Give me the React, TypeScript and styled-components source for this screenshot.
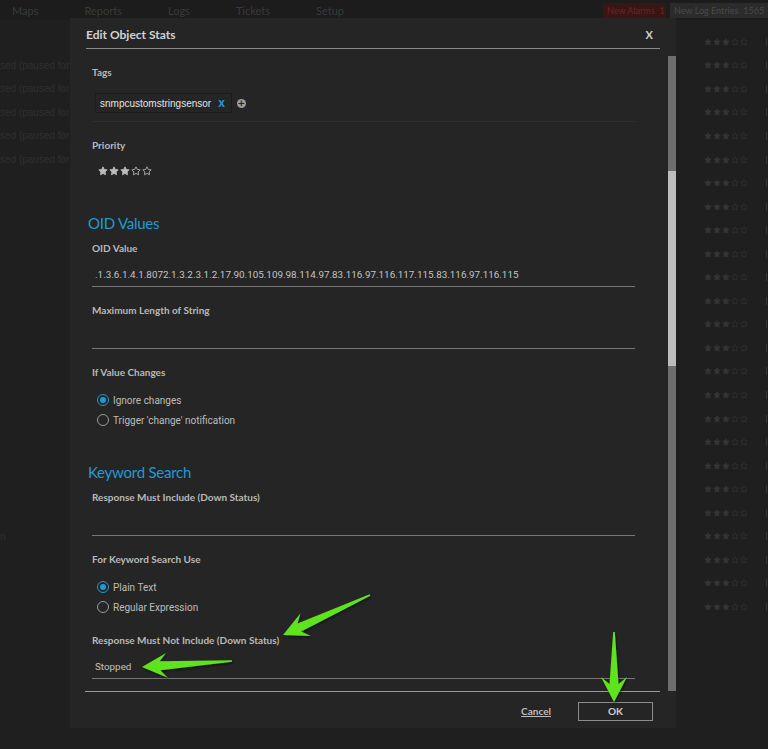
import styled, { createGlobalStyle } from 'styled-components';

const GlobalStyle = createGlobalStyle`
  html, body {
    margin: 0;
    padding: 0;
    background: #1f1f1f;
  }
  * {
    box-sizing: border-box;
  }
`;

const COLORS = {
  BG: '#1f1f1f',
  MODAL: '#252525',
  LABEL: '#b9b9b9',
  TEXT: '#bdbdbd',
  BLUE: '#1e9ad6',
  LINE: '#777777',
  DIM: '#353535',
  GREEN: '#5fe31a',
};

const StyledPage = styled.div`
  position: relative;
  width: 768px;
  height: 749px;
  overflow: hidden;
  background: ${COLORS.BG};
  font-family: Lato, 'Open Sans', sans-serif;
`;

const NavBar = styled.div`
  display: flex;
  align-items: center;
  gap: 46px;
  height: 20px;
  padding-left: 12px;
  background: #1c1c1c;
`;

const NavItem = styled.span`
  font-size: 11px;
  color: #3a3a3a;
`;

const NavBadges = styled.div`
  display: flex;
  gap: 4px;
  margin-left: auto;
  flex-shrink: 0;
`;

const Badge = styled.span<{ $tone: 'red' | 'gray'; $w: number }>`
  display: flex;
  align-items: center;
  gap: 5px;
  width: ${({ $w }) => $w}px;
  height: 15px;
  padding-left: 4px;
  font-size: 9px;
  white-space: nowrap;
  background: ${({ $tone }) => ($tone === 'red' ? '#3a1515' : '#2b2b2b')};
  color: ${({ $tone }) => ($tone === 'red' ? '#6b2424' : '#4a4a4a')};
`;

const BgTable = styled.div`
  display: flex;
  flex-direction: column;
  padding-top: 10px;
`;

const BgRow = styled.div`
  display: grid;
  grid-template-columns: 70px 1fr 62px 2px;
  align-items: center;
  height: 23.55px;
`;

const BgText = styled.span`
  font-family: 'Liberation Sans', Arial, sans-serif;
  font-size: 10px;
  color: #2f2f2f;
  white-space: nowrap;
`;

const BgMark = styled.span`
  width: 1px;
  height: 8px;
  background: #333;
`;

const StarRow = styled.div<{ $size: number; $pad?: number }>`
  display: flex;
  align-items: center;
  gap: 1px;
  padding-left: ${({ $pad }) => $pad ?? 0}px;
  svg {
    width: ${({ $size }) => $size}px;
    height: ${({ $size }) => $size}px;
  }
`;

const Modal = styled.div`
  position: absolute;
  left: 70px;
  top: 18px;
  width: 606px;
  height: 710px;
  display: flex;
  flex-direction: column;
  background: ${COLORS.MODAL};
`;

const ModalHeader = styled.div`
  display: flex;
  align-items: center;
  justify-content: space-between;
  height: 31px;
  margin: 0 16px;
  padding-top: 3px;
  padding-right: 7px;
  border-bottom: 1px solid #8a8a8a;

  .modal__title {
    font-size: 12px;
    font-weight: 700;
    color: #d2d2d2;
  }
  .modal__close {
    font-size: 11px;
    font-weight: 700;
    color: #cfcfcf;
  }
`;

const ModalBody = styled.div`
  flex: 1;
  display: flex;
  min-height: 0;
`;

const Content = styled.div`
  flex: 1;
  padding: 16px 33px 0 22px;
  overflow: hidden;
`;

const ScrollTrack = styled.div`
  width: 8px;
  margin-top: 7px;
  background: #6e6e6e;
`;

const ScrollThumb = styled.div`
  height: 195px;
  margin-top: 115px;
  background: #bdbdbd;
`;

const Field = styled.div`
  margin-top: 16px;
  &:first-child {
    margin-top: 0;
  }
`;

const SectionTitle = styled.h2`
  margin: 32px 0 0 -4px;
  font-size: 15px;
  font-weight: 400;
  letter-spacing: -0.25px;
  line-height: 20px;
  color: ${COLORS.BLUE};

  & + ${Field} {
    margin-top: 8px;
  }
`;

const Label = styled.div`
  font-size: 10px;
  font-weight: 700;
  line-height: 14px;
  color: ${COLORS.LABEL};
`;

const TagBox = styled.div`
  display: flex;
  align-items: flex-start;
  gap: 5px;
  height: 36px;
  margin-top: 7px;
  padding: 7px 0 0 3px;
  border-bottom: 1px solid #2f2f2f;
`;

const TagChip = styled.span`
  display: flex;
  align-items: center;
  gap: 7px;
  height: 20px;
  padding: 0 6px 0 4px;
  border: 1px solid #1b1b1b;
  font-family: 'Liberation Sans', Arial, sans-serif;
  font-size: 10px;
  color: #e4e4e4;

  .tag__remove {
    font-weight: 700;
    font-size: 12px;
    color: ${COLORS.BLUE};
  }
`;

const AddTag = styled.span`
  display: flex;
  align-items: center;
  justify-content: center;
  width: 9px;
  height: 9px;
  margin-top: 6px;
  border-radius: 50%;
  background: #9b9b9b;
  color: #252525;
  font-family: 'DejaVu Sans', sans-serif;
  font-size: 9px;
  font-weight: 700;
  line-height: 9px;
`;

const Stars = styled(StarRow)`
  height: 20px;
  margin-top: 9px;
`;

const Input = styled.div`
  display: flex;
  align-items: flex-end;
  height: 31px;
  margin-top: 1px;
  padding: 0 3px 4px;
  border-bottom: 1px solid ${COLORS.LINE};
  font-family: Roboto, 'Liberation Sans', sans-serif;
  font-size: 9.85px;
  line-height: 14px;
  color: #c4c4c4;
  white-space: nowrap;
`;

const RadioGroup = styled.div`
  display: flex;
  flex-direction: column;
  margin-top: 11px;
`;

const RadioRow = styled.label`
  display: flex;
  align-items: center;
  gap: 4px;
  height: 20px;
  padding-left: 5px;
  font-family: Roboto, 'Liberation Sans', sans-serif;
  font-size: 10px;
  color: ${COLORS.TEXT};
`;

const RadioCircle = styled.span<{ $checked?: boolean }>`
  display: flex;
  align-items: center;
  justify-content: center;
  width: 12px;
  height: 12px;
  border-radius: 50%;
  border: 1.5px solid ${({ $checked }) => ($checked ? COLORS.BLUE : '#9a9a9a')};

  &::after {
    content: '';
    width: 6px;
    height: 6px;
    border-radius: 50%;
    background: ${({ $checked }) => ($checked ? COLORS.BLUE : 'transparent')};
  }
`;

const ModalFooter = styled.div`
  display: flex;
  align-items: center;
  justify-content: flex-end;
  gap: 27px;
  height: 37px;
  margin: 0 16px 0 15px;
  padding: 2px 7px 0 0;
  border-top: 1px solid #9a9a9a;
`;

const LinkButton = styled.button`
  padding: 0;
  border: none;
  background: none;
  font-family: inherit;
  font-size: 10px;
  font-weight: 700;
  color: #bcbcbc;
  text-decoration: underline;
`;

const OutlineButton = styled.button`
  width: 75px;
  height: 19px;
  padding: 0;
  border: 1px solid #8c8c8c;
  background: none;
  font-family: inherit;
  font-size: 10px;
  font-weight: 700;
  color: #cfcfcf;
`;

const Annotations = styled.svg`
  position: absolute;
  inset: 0;
  pointer-events: none;
`;

const STAR_PATH =
  'M12 2l3.09 6.26L22 9.27l-5 4.87 1.18 6.88L12 17.77l-6.18 3.25L7 14.14 2 9.27l6.91-1.01L12 2z';

function Star({ filled, color }: { filled: boolean; color: string }) {
  return (
    <svg viewBox='0 0 24 24'>
      <path
        d={STAR_PATH}
        fill={filled ? color : 'none'}
        stroke={color}
        strokeWidth={2}
        strokeLinejoin='round'
      />
    </svg>
  );
}

function Rating({ value, color }: { value: number; color: string }) {
  return (
    <>
      {[0, 1, 2, 3, 4].map((i) => (
        <Star key={i} filled={i < value} color={color} />
      ))}
    </>
  );
}

// tapered "swoosh" arrow from tail to tip
const arrowPoints = (x1: number, y1: number, x2: number, y2: number, head = 25, half = 12.5, neck = 4.5) => {
  const len = Math.hypot(x2 - x1, y2 - y1);
  const ux = (x2 - x1) / len;
  const uy = (y2 - y1) / len;
  const nx = -uy;
  const ny = ux;
  const p = (d: number, w: number) => [x2 - ux * d + nx * w, y2 - uy * d + ny * w];
  return [p(len, 0.8), p(head * 0.72, neck), p(head, half), [x2, y2], p(head, -half), p(head * 0.72, -neck), p(len, -0.8)]
    .map(([a, b]) => `${a.toFixed(1)},${b.toFixed(1)}`)
    .join(' ');
};

const NAV = ['Maps', 'Reports', 'Logs', 'Tickets', 'Setup'];
const BG_LEFT: Record<number, string> = {
  1: 'sed (paused for',
  2: 'sed (paused for',
  3: 'sed (paused for',
  4: 'sed (paused for',
  5: 'sed (paused for',
  21: 'n',
};
const OID =
  '.1.3.6.1.4.1.8072.1.3.2.3.1.2.17.90.105.109.98.114.97.83.116.97.116.117.115.83.116.97.116.115';

function App() {
  return (
    <StyledPage>
      <GlobalStyle />
      <NavBar>
        {NAV.map((item) => (
          <NavItem key={item}>{item}</NavItem>
        ))}
        <NavBadges>
          <Badge $tone='red' $w={63}>
            New Alarms <span>1</span>
          </Badge>
          <Badge $tone='gray' $w={98}>
            New Log Entries <span>1565</span>
          </Badge>
        </NavBadges>
      </NavBar>

      <BgTable>
        {Array.from({ length: 25 }, (_, i) => (
          <BgRow key={i}>
            <BgText>{BG_LEFT[i] ?? ''}</BgText>
            <span />
            <StarRow $size={8}>
              <Rating value={3} color={COLORS.DIM} />
            </StarRow>
            <BgMark />
          </BgRow>
        ))}
      </BgTable>

      <Modal>
        <ModalHeader>
          <span className='modal__title'>Edit Object Stats</span>
          <span className='modal__close'>X</span>
        </ModalHeader>
        <ModalBody>
          <Content>
            <Field>
              <Label>Tags</Label>
              <TagBox>
                <TagChip>
                  snmpcustomstringsensor
                  <span className='tag__remove'>x</span>
                </TagChip>
                <AddTag>+</AddTag>
              </TagBox>
            </Field>
            <Field>
              <Label>Priority</Label>
              <Stars $size={10} $pad={6}>
                <Rating value={3} color='#bcbcbc' />
              </Stars>
            </Field>

            <SectionTitle>OID Values</SectionTitle>
            <Field>
              <Label>OID Value</Label>
              <Input>{OID}</Input>
            </Field>
            <Field>
              <Label>Maximum Length of String</Label>
              <Input />
            </Field>
            <Field>
              <Label>If Value Changes</Label>
              <RadioGroup>
                <RadioRow>
                  <RadioCircle $checked />
                  Ignore changes
                </RadioRow>
                <RadioRow>
                  <RadioCircle />
                  Trigger 'change' notification
                </RadioRow>
              </RadioGroup>
            </Field>

            <SectionTitle>Keyword Search</SectionTitle>
            <Field>
              <Label>Response Must Include (Down Status)</Label>
              <Input />
            </Field>
            <Field>
              <Label>For Keyword Search Use</Label>
              <RadioGroup>
                <RadioRow>
                  <RadioCircle $checked />
                  Plain Text
                </RadioRow>
                <RadioRow>
                  <RadioCircle />
                  Regular Expression
                </RadioRow>
              </RadioGroup>
            </Field>
            <Field>
              <Label>Response Must Not Include (Down Status)</Label>
              <Input>Stopped</Input>
            </Field>
          </Content>
          <ScrollTrack>
            <ScrollThumb />
          </ScrollTrack>
        </ModalBody>
        <ModalFooter>
          <LinkButton>Cancel</LinkButton>
          <OutlineButton>OK</OutlineButton>
        </ModalFooter>
      </Modal>

      <Annotations width='768' height='749' viewBox='0 0 768 749'>
        <defs>
          <filter id='arrowShadow' x='-20%' y='-20%' width='140%' height='140%'>
            <feDropShadow dx='1' dy='1.5' stdDeviation='1' floodColor='#000' floodOpacity='0.55' />
          </filter>
        </defs>
        <g fill={COLORS.GREEN} filter='url(#arrowShadow)'>
          <polygon points={arrowPoints(370, 595, 283, 635)} />
          <polygon points={arrowPoints(232, 661, 142, 667)} />
          <polygon points={arrowPoints(614, 632, 614, 702, 25, 13)} />
        </g>
      </Annotations>
    </StyledPage>
  );
}

export default App;
